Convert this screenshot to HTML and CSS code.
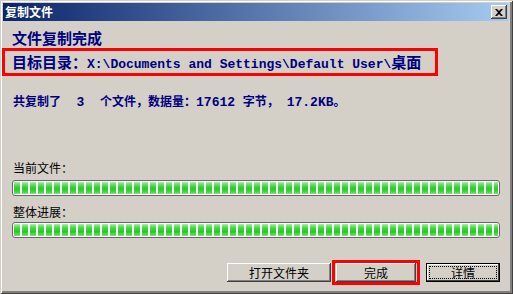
FILE: index.html
```html
<!DOCTYPE html>
<html lang="zh-CN">
<head>
  <meta charset="UTF-8" />
  <title>复制文件</title>
  <link rel="stylesheet" href="styles.css">
</head>
<body>
  <div class="window">
    <div class="titlebar">
      <span class="title">复制文件</span>
      <span class="close">
        <svg width="8" height="7" viewBox="0 0 8 7"><path d="M0 0h2l2 2 2-2h2L5 3.5 8 7H6L4 5 2 7H0l3-3.5z" fill="#000"/></svg>
      </span>
    </div>
    <div class="content">
      <h1 class="heading">文件复制完成</h1>
      <div class="path">目标目录：<span class="mono">X:\Documents and Settings\Default User\</span>桌面</div>
      <div class="summary">共复制了<span class="mono">  3  </span>个文件，数据量：<span class="mono">17612 </span>字节，<span class="mono"> 17.2KB</span>。</div>

      <div class="label label-first">当前文件：</div>
      <div class="progress"><div class="fill"></div></div>
      <div class="label label-second">整体进展：</div>
      <div class="progress progress-second"><div class="fill"></div></div>

      <div class="buttons">
        <button class="btn btn-open">打开文件夹</button>
        <span class="mark"><button class="btn btn-done">完成</button></span>
        <button class="btn btn-detail"><span class="focus">详情</span></button>
      </div>
    </div>
  </div>
</body>
</html>
```

FILE: styles.css
```css
body {
  margin: 0;
  font-family: "Noto Sans CJK SC", sans-serif;
  font-size: 12px;
}
.window {
  width: 513px;
  height: 294px;
  box-sizing: border-box;
  padding: 3px 5px 3px 3px;
  background-color: #d4d0c8;
  box-shadow: inset 1px 1px #d4d0c8, inset -1px -1px #404040, inset 2px 2px #fff, inset -3px -3px #808080;
  overflow: hidden;
}
.titlebar {
  height: 18px;
  display: flex;
  align-items: center;
  justify-content: space-between;
  padding-left: 2px;
  background: linear-gradient(to right, #0a246a, #a6caf0);
}
.title {
  color: #fff;
  font-weight: bold;
  font-size: 12px;
  line-height: 18px;
}
.close {
  width: 16px;
  height: 14px;
  margin-right: 1px;
  box-sizing: border-box;
  display: flex;
  align-items: center;
  justify-content: center;
  background-color: #d4d0c8;
  box-shadow: inset -1px -1px #404040, inset 1px 1px #fff, inset -2px -2px #808080;
}
.content {
  padding: 0 8px 0 9px;
  color: #000080;
}
.heading {
  margin: 8px 0 0;
  font-size: 15px;
  line-height: 18px;
  font-weight: bold;
}
.path {
  margin: 1px 0 0 -10px;
  width: 423px;
  height: 22px;
  padding-left: 7px;
  border: 3px solid #ff0000;
  font-size: 15px;
  line-height: 22px;
  font-weight: bold;
  white-space: pre;
}
.path .mono {
  font-family: "Liberation Mono", monospace;
  font-size: 13px;
}
.summary {
  margin: 18px 0 0 1px;
  font-size: 12px;
  line-height: 14px;
  font-weight: bold;
  white-space: pre;
}
.summary .mono {
  font-family: "Liberation Mono", monospace;
  font-size: 13px;
}
.label {
  margin-left: 1px;
  color: #000;
  line-height: 14px;
}
.label-first {
  margin-top: 51px;
}
.label-second {
  margin-top: 9px;
}
.progress {
  margin-top: 5px;
  width: 488px;
  height: 16px;
  box-sizing: border-box;
  padding: 1px;
  border: 1px solid #686868;
  border-radius: 3px;
  background-color: #fff;
}
.progress-second {
  margin-top: 3px;
}
.fill {
  height: 12px;
  background:
    repeating-linear-gradient(to right, transparent 0 6px, #fff 6px 8px),
    linear-gradient(#a8eea8, #3ed83e 35%, #22cc22 65%, #78e078);
}
.buttons {
  margin-top: 22px;
  display: flex;
  justify-content: flex-end;
  align-items: center;
}
.btn {
  height: 19px;
  padding: 0;
  border: none;
  font-family: "Noto Sans CJK SC", sans-serif;
  font-size: 12px;
  line-height: 19px;
  color: #000;
  background-color: #d4d0c8;
  box-shadow: inset -1px -1px #404040, inset 1px 1px #fff, inset -2px -2px #808080;
}
.btn-open {
  width: 104px;
}
.mark {
  display: flex;
  margin-left: 1px;
  padding: 0 1px;
  border: 3px solid #ff0000;
}
.btn-done {
  width: 80px;
}
.btn-detail {
  width: 74px;
  margin-left: 6px;
  display: flex;
  padding: 3px;
  box-shadow: inset 0 0 0 1px #000, inset -2px -2px #404040, inset 2px 2px #fff;
}
.focus {
  flex: 1;
  line-height: 11px;
  border: 1px dotted #000;
}
```
